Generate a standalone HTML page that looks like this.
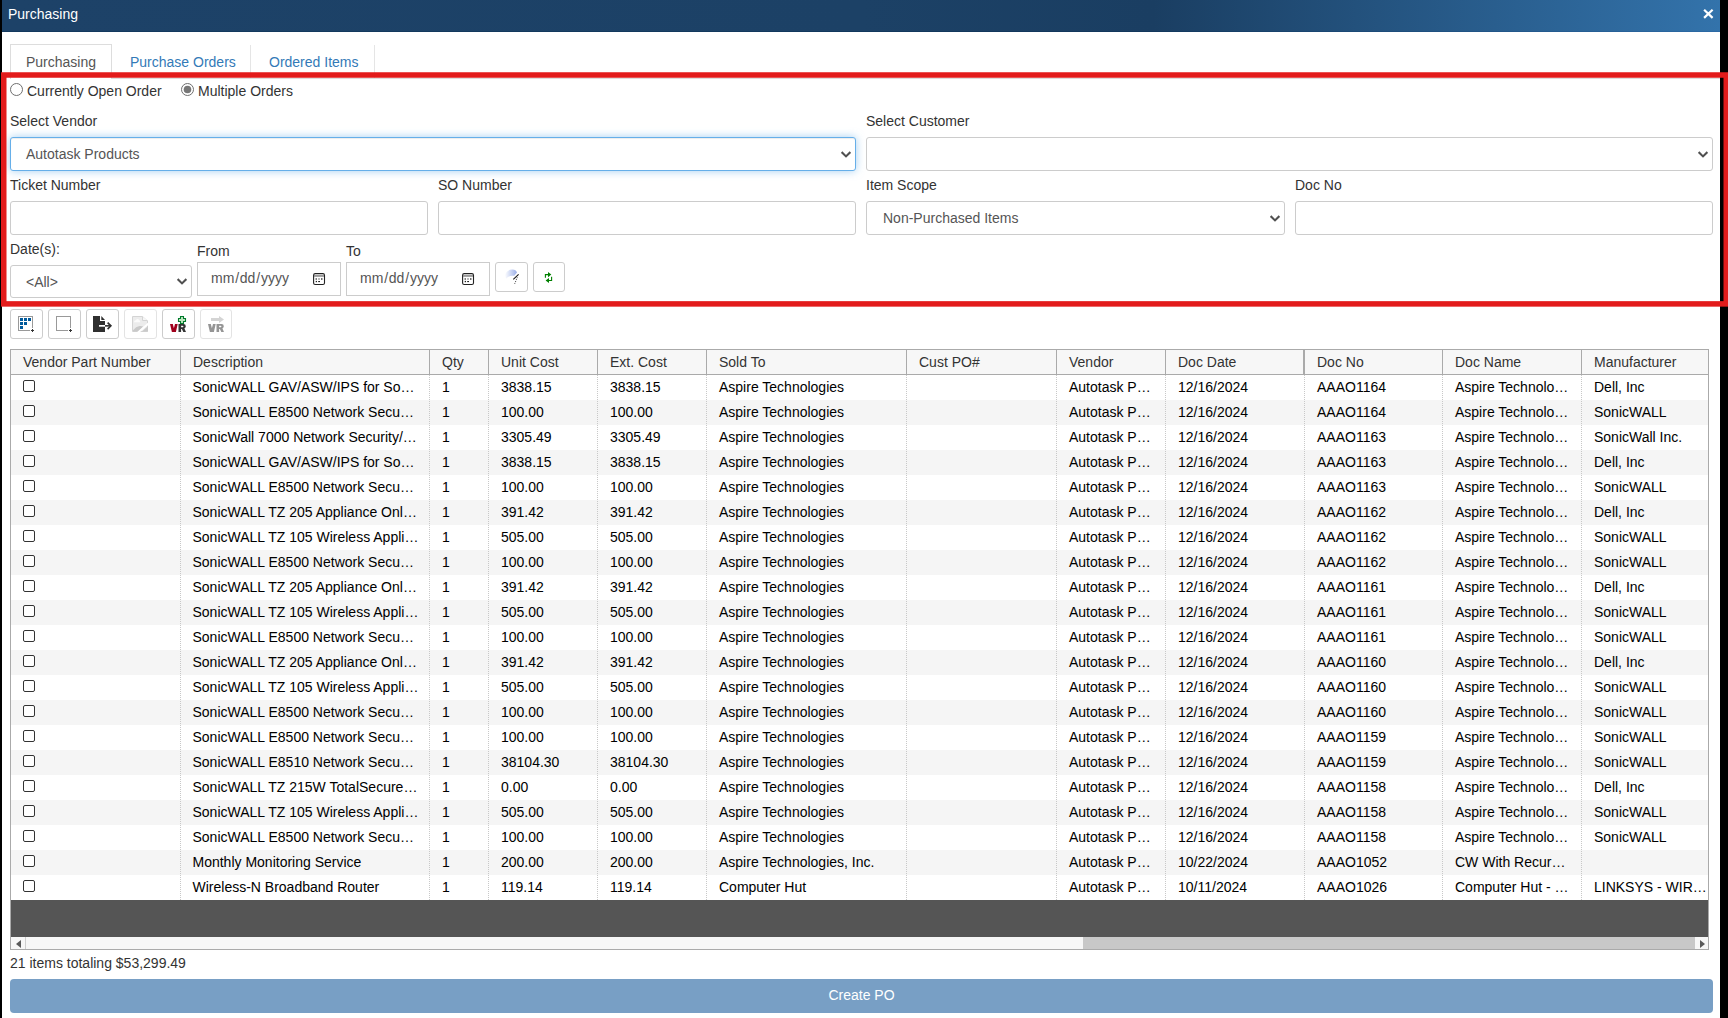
<!DOCTYPE html>
<html><head><meta charset="utf-8">
<style>
*{box-sizing:border-box;margin:0;padding:0}
html,body{width:1728px;height:1018px;overflow:hidden;background:#000;font-family:"Liberation Sans",sans-serif;font-size:14px;color:#333}
.a{position:absolute}
#dlg{position:absolute;left:2px;top:0;width:1718px;height:1018px;background:#fff;overflow:hidden}
#title{position:absolute;left:2px;top:0;width:1718px;height:32px;background:linear-gradient(to right,#1d4268 0%,#1c4166 50%,#1a3e62 67%,#3373ab 100%);}
#title .t{position:absolute;left:6px;top:6px;color:#fff;font-size:14px}
#title .x{position:absolute;right:8px;top:6px;color:#fff;font-size:16px;font-weight:bold}
.lbl{position:absolute;font-size:14px;color:#333;line-height:16px;white-space:nowrap}
.inp{position:absolute;border:1px solid #ccc;border-radius:3px;background:#fff}
.sel{position:absolute;border:1px solid #ccc;border-radius:3px;background:#fff;color:#555;line-height:16px;white-space:nowrap}
.chev{position:absolute;width:10px;height:7px}
.btn{position:absolute;border:1px solid #ccc;border-radius:3px;background:#fff}
#red{position:absolute;left:1px;top:72px;width:1727px;height:234px;border:5px solid #e31b1b}
.th{color:#333}
.td{color:#000}
.cb{position:absolute;width:12px;height:12px;border:1.2px solid #333;border-radius:2px;background:#fff}
.dsep{width:1px;background-image:linear-gradient(to bottom,#c8c8c8 50%,transparent 50%);background-size:1px 2px}
</style></head><body>
<div id="dlg"></div>
<div id="title"><span class="t">Purchasing</span></div>

<svg class="a" style="left:1700px;top:6px" width="16" height="16" viewBox="1700 6 16 16"><path d="M1704.9 10.5 L1711.8 17.1 M1711.8 10.5 L1704.9 17.1" stroke="#fff" stroke-width="2.2" stroke-linecap="square"/></svg>
<div class="a" style="left:2px;top:31px;width:1718px;height:1px;background:linear-gradient(to right,#13395e 0%,#12375c 67%,#2c6aa5 100%)"></div>
<!-- tabs -->
<div class="a" style="left:10px;top:44px;width:102px;height:35px;border:1px solid #ddd;border-bottom:none"></div>
<div class="a" style="left:250px;top:45px;width:1px;height:33px;background:#e5e5e5"></div>
<div class="a" style="left:374px;top:45px;width:1px;height:33px;background:#e5e5e5"></div>
<div class="a" style="left:111px;top:78px;width:1609px;height:1px;background:#ddd"></div>
<div class="lbl" style="left:26px;top:54px;color:#555">Purchasing</div>
<div class="lbl" style="left:130px;top:54px;color:#337ab7">Purchase Orders</div>
<div class="lbl" style="left:269px;top:54px;color:#337ab7">Ordered Items</div>

<!-- radios -->
<svg class="a" style="left:9px;top:82px" width="15" height="15"><circle cx="7.5" cy="7.5" r="6" fill="#fff" stroke="#6f6f6f" stroke-width="1"/></svg>
<div class="lbl" style="left:27px;top:83px">Currently Open Order</div>
<svg class="a" style="left:180px;top:82px" width="15" height="15"><circle cx="7.5" cy="7.5" r="6" fill="#fff" stroke="#6f6f6f" stroke-width="1"/><circle cx="7.5" cy="7.5" r="3.8" fill="#777"/></svg>
<div class="lbl" style="left:198px;top:83px">Multiple Orders</div>

<!-- row 1 -->
<div class="lbl" style="left:10px;top:113px">Select Vendor</div>
<div class="sel" style="left:10px;top:137px;width:846px;height:34px;border-color:#66afe9;box-shadow:inset 0 1px 1px rgba(0,0,0,.075),0 0 8px rgba(102,175,233,.6);color:#555;padding:8px 0 0 15px">Autotask Products</div>
<svg class="chev" style="left:841px;top:150.5px" viewBox="0 0 10 7"><path d="M0.6 1.1 L5 5.4 L9.4 1.1" fill="none" stroke="#505050" stroke-width="2.1"/></svg>
<div class="lbl" style="left:866px;top:113px">Select Customer</div>
<div class="sel" style="left:866px;top:137px;width:847px;height:34px"></div>
<svg class="chev" style="left:1698px;top:150.5px" viewBox="0 0 10 7"><path d="M0.6 1.1 L5 5.4 L9.4 1.1" fill="none" stroke="#505050" stroke-width="2.1"/></svg>

<!-- row 2 -->
<div class="lbl" style="left:10px;top:177px">Ticket Number</div>
<div class="inp" style="left:10px;top:201px;width:418px;height:34px"></div>
<div class="lbl" style="left:438px;top:177px">SO Number</div>
<div class="inp" style="left:438px;top:201px;width:418px;height:34px"></div>
<div class="lbl" style="left:866px;top:177px">Item Scope</div>
<div class="sel" style="left:866px;top:201px;width:419px;height:34px;padding:8px 0 0 16px">Non-Purchased Items</div>
<svg class="chev" style="left:1270px;top:214.5px" viewBox="0 0 10 7"><path d="M0.6 1.1 L5 5.4 L9.4 1.1" fill="none" stroke="#505050" stroke-width="2.1"/></svg>
<div class="lbl" style="left:1295px;top:177px">Doc No</div>
<div class="inp" style="left:1295px;top:201px;width:418px;height:34px"></div>

<!-- row 3 -->
<div class="lbl" style="left:10px;top:241px">Date(s):</div>
<div class="sel" style="left:10px;top:265px;width:182px;height:33px;padding:8px 0 0 15px">&lt;All&gt;</div>
<svg class="chev" style="left:177px;top:277.5px" viewBox="0 0 10 7"><path d="M0.6 1.1 L5 5.4 L9.4 1.1" fill="none" stroke="#505050" stroke-width="2.1"/></svg>
<div class="lbl" style="left:197px;top:243px">From</div>
<div class="inp" style="left:197px;top:262px;width:144px;height:34px;border-radius:0"></div>
<div class="lbl" style="left:211px;top:270px;color:#555">mm<span style="margin:0 0.8px">/</span>dd<span style="margin:0 0.8px">/</span>yyyy</div>
<div class="lbl" style="left:346px;top:243px">To</div>
<div class="inp" style="left:346px;top:262px;width:144px;height:34px;border-radius:0"></div>
<div class="lbl" style="left:360px;top:270px;color:#555">mm<span style="margin:0 0.8px">/</span>dd<span style="margin:0 0.8px">/</span>yyyy</div>
<div class="btn" style="left:495px;top:262px;width:33px;height:30px"></div>
<div class="btn" style="left:533px;top:262px;width:32px;height:30px"></div>

<svg class="a" style="left:0;top:0" width="1728" height="320" viewBox="0 0 1728 320"><rect x="3.75" y="75" width="1722.5" height="228.9" fill="none" stroke="#e31b1b" stroke-width="5.5"/></svg>

<!-- toolbar -->
<div class="btn" style="left:10px;top:309px;width:33px;height:30px"></div>
<div class="btn" style="left:48px;top:309px;width:33px;height:30px"></div>
<div class="btn" style="left:86px;top:309px;width:33px;height:30px"></div>
<div class="btn" style="left:124px;top:309px;width:33px;height:30px;border-color:#e3e3e3"></div>
<div class="btn" style="left:162px;top:309px;width:33px;height:30px"></div>
<div class="btn" style="left:200px;top:309px;width:32px;height:30px;border-color:#e3e3e3"></div>


<svg class="a" style="left:10px;top:309px" width="33" height="30" viewBox="10 309 33 30" shape-rendering="crispEdges">
<g fill="#999"><rect x="18" y="316" width="15" height="1"/><rect x="18" y="316" width="1" height="15"/><rect x="32" y="316" width="1" height="12"/><rect x="18" y="330" width="12" height="1"/></g>
<g fill="#005a9c"><rect x="20" y="318" width="3" height="3"/><rect x="24" y="318" width="3" height="3"/><rect x="28" y="318" width="3" height="3"/><rect x="20" y="322" width="3" height="3"/><rect x="24" y="322" width="3" height="3"/><rect x="20" y="326" width="3" height="3"/></g>
<g fill="#333"><rect x="31" y="330" width="3" height="1"/><rect x="32" y="329" width="1" height="3"/></g>
</svg>
<svg class="a" style="left:48px;top:309px" width="33" height="30" viewBox="48 309 33 30" shape-rendering="crispEdges">
<g fill="#999"><rect x="56" y="316" width="15" height="1"/><rect x="56" y="316" width="1" height="15"/><rect x="70" y="316" width="1" height="12"/><rect x="56" y="330" width="12" height="1"/></g>
<g fill="#333"><rect x="69" y="330" width="3" height="1"/><rect x="70" y="329" width="1" height="3"/></g>
</svg>
<svg class="a" style="left:86px;top:309px" width="33" height="30" viewBox="86 309 33 30">
<path d="M93 316 H100 V321 H105 V332 H93 Z" fill="#2f2f2f"/>
<path d="M101.3 316 L105 320 H101.3 Z" fill="#2f2f2f"/>
<rect x="99" y="325" width="6" height="1.7" fill="#fff"/>
<path d="M105 325.85 H110.5" stroke="#2f2f2f" stroke-width="1.6"/>
<path d="M107.6 322.6 L110.9 325.85 L107.6 329.1" fill="none" stroke="#2f2f2f" stroke-width="1.6"/>
</svg>
<svg class="a" style="left:124px;top:309px" width="33" height="30" viewBox="124 309 33 30">
<path d="M132.5 316.5 H142.5 L147.5 321 V331.5 H132.5 Z" fill="#ececec" stroke="#d4d4d4" stroke-width="1"/>
<path d="M142.5 316.5 V320.5 H147.5" fill="#f6f6f6" stroke="#d4d4d4" stroke-width="1"/>
<path d="M133.8 322.2 Q134.2 320.2 136 320 Q136.8 318.8 138.3 319.2 Q140 319.6 140.3 322.2 Z" fill="#fbfbfb"/>
<path d="M133 331.5 V330.2 Q136 326.6 139.5 326.1 Q141.5 325.9 143.2 326.4 L138.6 331.5 Z" fill="#c9c9c9"/>
<path d="M142 331.5 L148 326 V331.5 Z" fill="#cacaca"/>
<path d="M138 332.5 L148.5 323.5" stroke="#fff" stroke-width="2"/>
</svg>
<svg class="a" style="left:162px;top:309px" width="33" height="30" viewBox="162 309 33 30">
<path d="M178.5 318.5 H180.5 V316.5 H183.5 V318.5 H185.5 V321.5 H183.5 V323.5 H180.5 V321.5 H178.5 Z" fill="#bfe6bf" stroke="#017a2c" stroke-width="1.1"/>
<path d="M170 324 H172.8 L173.9 328.3 L175 324 H177.7 L175.9 332 H171.9 Z" fill="#a0001c"/>
<path fill-rule="evenodd" d="M178.5 324 H183.5 Q185.8 324 185.8 326.2 Q185.8 327.8 184.4 328.4 L186 332 H183.3 L181.9 328.9 H181.1 V332 H178.5 Z M181.1 325.7 V327.3 H182.7 Q183.4 327.3 183.4 326.5 Q183.4 325.7 182.7 325.7 Z" fill="#333"/>
</svg>
<svg class="a" style="left:200px;top:309px" width="33" height="30" viewBox="200 309 33 30">
<path d="M211 318 H219 V316 L224 319.5 L219 323 V321 H211 Z" fill="#d4d4d4"/>
<path d="M208 324 H210.8 L211.9 328.3 L213 324 H215.7 L213.9 332 H209.9 Z" fill="#959595"/>
<path fill-rule="evenodd" d="M216.5 324 H221.5 Q223.8 324 223.8 326.2 Q223.8 327.8 222.4 328.4 L224 332 H221.3 L219.9 328.9 H219.1 V332 H216.5 Z M219.1 325.7 V327.3 H220.7 Q221.4 327.3 221.4 326.5 Q221.4 325.7 220.7 325.7 Z" fill="#959595"/>
</svg>
<svg class="a" style="left:300px;top:262px" width="30" height="30" viewBox="300 262 30 30">
<rect x="313.6" y="273.6" width="10.9" height="10.9" rx="1.6" fill="none" stroke="#222" stroke-width="1.1"/>
<rect x="314" y="275.2" width="10" height="1.5" fill="#808080"/>
<g fill="#222"><rect x="315.6" y="278.3" width="1.2" height="1.4"/><rect x="318.3" y="278.3" width="1.4" height="1.4" fill="#777"/><rect x="321.2" y="278.2" width="1.2" height="1.6"/><rect x="315.7" y="280.9" width="1.3" height="1.3"/><rect x="318.2" y="281" width="1.8" height="1.1"/></g>
</svg>
<svg class="a" style="left:449px;top:262px" width="30" height="30" viewBox="449 262 30 30">
<rect x="462.6" y="273.6" width="10.9" height="10.9" rx="1.6" fill="none" stroke="#222" stroke-width="1.1"/>
<rect x="463" y="275.2" width="10" height="1.5" fill="#808080"/>
<g fill="#222"><rect x="464.6" y="278.3" width="1.2" height="1.4"/><rect x="467.3" y="278.3" width="1.4" height="1.4" fill="#777"/><rect x="470.2" y="278.2" width="1.2" height="1.6"/><rect x="464.7" y="280.9" width="1.3" height="1.3"/><rect x="467.2" y="281" width="1.8" height="1.1"/></g>
</svg>
<svg class="a" style="left:495px;top:262px" width="33" height="30" viewBox="495 262 33 30">
<defs><linearGradient id="sw" x1="0" x2="1" y1="0" y2="0"><stop offset="0" stop-color="#9aaee8" stop-opacity="0"/><stop offset="1" stop-color="#9aaee8"/></linearGradient></defs>
<path d="M504.8 275 Q507 269.5 512.5 269.6 Q516 269.8 517 272.5 L514.3 275.8 Q509.5 275 506 278.8 Z" fill="url(#sw)"/>
<path d="M513.3 279.3 L518.6 274.3" stroke="#111" stroke-width="1.1"/>
<path d="M517.3 277.3 L514.4 284.5" stroke="#333" stroke-width="0.9" stroke-dasharray="1 1"/>
</svg>
<svg class="a" style="left:533px;top:262px" width="32" height="30" viewBox="533 262 32 30">
<g fill="none" stroke="#008000" stroke-width="1.1"><path d="M545.4 277.8 V274.6 H549"/><path d="M551.6 276.8 V280.5 H548"/></g>
<g fill="#008000"><path d="M548 272 L551.3 274.6 L548 277.2 Z"/><path d="M549 277.9 L545.6 280.5 L549 283.1 Z"/></g>
</svg>

<!-- TABLE -->
<div id="tbl">
<div class="a" style="left:10px;top:349px;width:1699px;height:26px;background:#f7f7f7;border:1px solid #aaa;border-right-color:#aaa"></div>
<div class="a" style="left:180px;top:350px;width:1px;height:24px;background:#aaa"></div>
<div class="a" style="left:429px;top:350px;width:1px;height:24px;background:#aaa"></div>
<div class="a" style="left:488px;top:350px;width:1px;height:24px;background:#aaa"></div>
<div class="a" style="left:597px;top:350px;width:1px;height:24px;background:#aaa"></div>
<div class="a" style="left:706px;top:350px;width:1px;height:24px;background:#aaa"></div>
<div class="a" style="left:906px;top:350px;width:1px;height:24px;background:#aaa"></div>
<div class="a" style="left:1056px;top:350px;width:1px;height:24px;background:#aaa"></div>
<div class="a" style="left:1165px;top:350px;width:1px;height:24px;background:#aaa"></div>
<div class="a" style="left:1303px;top:350px;width:2px;height:24px;background:#aaa"></div>
<div class="a" style="left:1442px;top:350px;width:1px;height:24px;background:#aaa"></div>
<div class="a" style="left:1581px;top:350px;width:1px;height:24px;background:#aaa"></div>
<div class="lbl th" style="left:23px;top:354px">Vendor Part Number</div>
<div class="lbl th" style="left:193px;top:354px">Description</div>
<div class="lbl th" style="left:442px;top:354px">Qty</div>
<div class="lbl th" style="left:501px;top:354px">Unit Cost</div>
<div class="lbl th" style="left:610px;top:354px">Ext. Cost</div>
<div class="lbl th" style="left:719px;top:354px">Sold To</div>
<div class="lbl th" style="left:919px;top:354px">Cust PO#</div>
<div class="lbl th" style="left:1069px;top:354px">Vendor</div>
<div class="lbl th" style="left:1178px;top:354px">Doc Date</div>
<div class="lbl th" style="left:1317px;top:354px">Doc No</div>
<div class="lbl th" style="left:1455px;top:354px">Doc Name</div>
<div class="lbl th" style="left:1594px;top:354px">Manufacturer</div>
<div class="a" style="left:11px;top:375px;width:1697px;height:25px;background:#fff"></div>
<div class="cb" style="left:23px;top:380px"></div>
<div class="lbl td" style="left:192.5px;top:379px">SonicWALL GAV/ASW/IPS for So…</div>
<div class="lbl td" style="left:442px;top:379px">1</div>
<div class="lbl td" style="left:501px;top:379px">3838.15</div>
<div class="lbl td" style="left:610px;top:379px">3838.15</div>
<div class="lbl td" style="left:719px;top:379px">Aspire Technologies</div>
<div class="lbl td" style="left:1069px;top:379px">Autotask P…</div>
<div class="lbl td" style="left:1178px;top:379px">12/16/2024</div>
<div class="lbl td" style="left:1317px;top:379px">AAAO1164</div>
<div class="lbl td" style="left:1455px;top:379px">Aspire Technolo…</div>
<div class="lbl td" style="left:1594px;top:379px">Dell, Inc</div>
<div class="a" style="left:11px;top:400px;width:1697px;height:25px;background:#f5f5f5"></div>
<div class="cb" style="left:23px;top:405px"></div>
<div class="lbl td" style="left:192.5px;top:404px">SonicWALL E8500 Network Secu…</div>
<div class="lbl td" style="left:442px;top:404px">1</div>
<div class="lbl td" style="left:501px;top:404px">100.00</div>
<div class="lbl td" style="left:610px;top:404px">100.00</div>
<div class="lbl td" style="left:719px;top:404px">Aspire Technologies</div>
<div class="lbl td" style="left:1069px;top:404px">Autotask P…</div>
<div class="lbl td" style="left:1178px;top:404px">12/16/2024</div>
<div class="lbl td" style="left:1317px;top:404px">AAAO1164</div>
<div class="lbl td" style="left:1455px;top:404px">Aspire Technolo…</div>
<div class="lbl td" style="left:1594px;top:404px">SonicWALL</div>
<div class="a" style="left:11px;top:425px;width:1697px;height:25px;background:#fff"></div>
<div class="cb" style="left:23px;top:430px"></div>
<div class="lbl td" style="left:192.5px;top:429px">SonicWall 7000 Network Security/…</div>
<div class="lbl td" style="left:442px;top:429px">1</div>
<div class="lbl td" style="left:501px;top:429px">3305.49</div>
<div class="lbl td" style="left:610px;top:429px">3305.49</div>
<div class="lbl td" style="left:719px;top:429px">Aspire Technologies</div>
<div class="lbl td" style="left:1069px;top:429px">Autotask P…</div>
<div class="lbl td" style="left:1178px;top:429px">12/16/2024</div>
<div class="lbl td" style="left:1317px;top:429px">AAAO1163</div>
<div class="lbl td" style="left:1455px;top:429px">Aspire Technolo…</div>
<div class="lbl td" style="left:1594px;top:429px">SonicWall Inc.</div>
<div class="a" style="left:11px;top:450px;width:1697px;height:25px;background:#f5f5f5"></div>
<div class="cb" style="left:23px;top:455px"></div>
<div class="lbl td" style="left:192.5px;top:454px">SonicWALL GAV/ASW/IPS for So…</div>
<div class="lbl td" style="left:442px;top:454px">1</div>
<div class="lbl td" style="left:501px;top:454px">3838.15</div>
<div class="lbl td" style="left:610px;top:454px">3838.15</div>
<div class="lbl td" style="left:719px;top:454px">Aspire Technologies</div>
<div class="lbl td" style="left:1069px;top:454px">Autotask P…</div>
<div class="lbl td" style="left:1178px;top:454px">12/16/2024</div>
<div class="lbl td" style="left:1317px;top:454px">AAAO1163</div>
<div class="lbl td" style="left:1455px;top:454px">Aspire Technolo…</div>
<div class="lbl td" style="left:1594px;top:454px">Dell, Inc</div>
<div class="a" style="left:11px;top:475px;width:1697px;height:25px;background:#fff"></div>
<div class="cb" style="left:23px;top:480px"></div>
<div class="lbl td" style="left:192.5px;top:479px">SonicWALL E8500 Network Secu…</div>
<div class="lbl td" style="left:442px;top:479px">1</div>
<div class="lbl td" style="left:501px;top:479px">100.00</div>
<div class="lbl td" style="left:610px;top:479px">100.00</div>
<div class="lbl td" style="left:719px;top:479px">Aspire Technologies</div>
<div class="lbl td" style="left:1069px;top:479px">Autotask P…</div>
<div class="lbl td" style="left:1178px;top:479px">12/16/2024</div>
<div class="lbl td" style="left:1317px;top:479px">AAAO1163</div>
<div class="lbl td" style="left:1455px;top:479px">Aspire Technolo…</div>
<div class="lbl td" style="left:1594px;top:479px">SonicWALL</div>
<div class="a" style="left:11px;top:500px;width:1697px;height:25px;background:#f5f5f5"></div>
<div class="cb" style="left:23px;top:505px"></div>
<div class="lbl td" style="left:192.5px;top:504px">SonicWALL TZ 205 Appliance Onl…</div>
<div class="lbl td" style="left:442px;top:504px">1</div>
<div class="lbl td" style="left:501px;top:504px">391.42</div>
<div class="lbl td" style="left:610px;top:504px">391.42</div>
<div class="lbl td" style="left:719px;top:504px">Aspire Technologies</div>
<div class="lbl td" style="left:1069px;top:504px">Autotask P…</div>
<div class="lbl td" style="left:1178px;top:504px">12/16/2024</div>
<div class="lbl td" style="left:1317px;top:504px">AAAO1162</div>
<div class="lbl td" style="left:1455px;top:504px">Aspire Technolo…</div>
<div class="lbl td" style="left:1594px;top:504px">Dell, Inc</div>
<div class="a" style="left:11px;top:525px;width:1697px;height:25px;background:#fff"></div>
<div class="cb" style="left:23px;top:530px"></div>
<div class="lbl td" style="left:192.5px;top:529px">SonicWALL TZ 105 Wireless Appli…</div>
<div class="lbl td" style="left:442px;top:529px">1</div>
<div class="lbl td" style="left:501px;top:529px">505.00</div>
<div class="lbl td" style="left:610px;top:529px">505.00</div>
<div class="lbl td" style="left:719px;top:529px">Aspire Technologies</div>
<div class="lbl td" style="left:1069px;top:529px">Autotask P…</div>
<div class="lbl td" style="left:1178px;top:529px">12/16/2024</div>
<div class="lbl td" style="left:1317px;top:529px">AAAO1162</div>
<div class="lbl td" style="left:1455px;top:529px">Aspire Technolo…</div>
<div class="lbl td" style="left:1594px;top:529px">SonicWALL</div>
<div class="a" style="left:11px;top:550px;width:1697px;height:25px;background:#f5f5f5"></div>
<div class="cb" style="left:23px;top:555px"></div>
<div class="lbl td" style="left:192.5px;top:554px">SonicWALL E8500 Network Secu…</div>
<div class="lbl td" style="left:442px;top:554px">1</div>
<div class="lbl td" style="left:501px;top:554px">100.00</div>
<div class="lbl td" style="left:610px;top:554px">100.00</div>
<div class="lbl td" style="left:719px;top:554px">Aspire Technologies</div>
<div class="lbl td" style="left:1069px;top:554px">Autotask P…</div>
<div class="lbl td" style="left:1178px;top:554px">12/16/2024</div>
<div class="lbl td" style="left:1317px;top:554px">AAAO1162</div>
<div class="lbl td" style="left:1455px;top:554px">Aspire Technolo…</div>
<div class="lbl td" style="left:1594px;top:554px">SonicWALL</div>
<div class="a" style="left:11px;top:575px;width:1697px;height:25px;background:#fff"></div>
<div class="cb" style="left:23px;top:580px"></div>
<div class="lbl td" style="left:192.5px;top:579px">SonicWALL TZ 205 Appliance Onl…</div>
<div class="lbl td" style="left:442px;top:579px">1</div>
<div class="lbl td" style="left:501px;top:579px">391.42</div>
<div class="lbl td" style="left:610px;top:579px">391.42</div>
<div class="lbl td" style="left:719px;top:579px">Aspire Technologies</div>
<div class="lbl td" style="left:1069px;top:579px">Autotask P…</div>
<div class="lbl td" style="left:1178px;top:579px">12/16/2024</div>
<div class="lbl td" style="left:1317px;top:579px">AAAO1161</div>
<div class="lbl td" style="left:1455px;top:579px">Aspire Technolo…</div>
<div class="lbl td" style="left:1594px;top:579px">Dell, Inc</div>
<div class="a" style="left:11px;top:600px;width:1697px;height:25px;background:#f5f5f5"></div>
<div class="cb" style="left:23px;top:605px"></div>
<div class="lbl td" style="left:192.5px;top:604px">SonicWALL TZ 105 Wireless Appli…</div>
<div class="lbl td" style="left:442px;top:604px">1</div>
<div class="lbl td" style="left:501px;top:604px">505.00</div>
<div class="lbl td" style="left:610px;top:604px">505.00</div>
<div class="lbl td" style="left:719px;top:604px">Aspire Technologies</div>
<div class="lbl td" style="left:1069px;top:604px">Autotask P…</div>
<div class="lbl td" style="left:1178px;top:604px">12/16/2024</div>
<div class="lbl td" style="left:1317px;top:604px">AAAO1161</div>
<div class="lbl td" style="left:1455px;top:604px">Aspire Technolo…</div>
<div class="lbl td" style="left:1594px;top:604px">SonicWALL</div>
<div class="a" style="left:11px;top:625px;width:1697px;height:25px;background:#fff"></div>
<div class="cb" style="left:23px;top:630px"></div>
<div class="lbl td" style="left:192.5px;top:629px">SonicWALL E8500 Network Secu…</div>
<div class="lbl td" style="left:442px;top:629px">1</div>
<div class="lbl td" style="left:501px;top:629px">100.00</div>
<div class="lbl td" style="left:610px;top:629px">100.00</div>
<div class="lbl td" style="left:719px;top:629px">Aspire Technologies</div>
<div class="lbl td" style="left:1069px;top:629px">Autotask P…</div>
<div class="lbl td" style="left:1178px;top:629px">12/16/2024</div>
<div class="lbl td" style="left:1317px;top:629px">AAAO1161</div>
<div class="lbl td" style="left:1455px;top:629px">Aspire Technolo…</div>
<div class="lbl td" style="left:1594px;top:629px">SonicWALL</div>
<div class="a" style="left:11px;top:650px;width:1697px;height:25px;background:#f5f5f5"></div>
<div class="cb" style="left:23px;top:655px"></div>
<div class="lbl td" style="left:192.5px;top:654px">SonicWALL TZ 205 Appliance Onl…</div>
<div class="lbl td" style="left:442px;top:654px">1</div>
<div class="lbl td" style="left:501px;top:654px">391.42</div>
<div class="lbl td" style="left:610px;top:654px">391.42</div>
<div class="lbl td" style="left:719px;top:654px">Aspire Technologies</div>
<div class="lbl td" style="left:1069px;top:654px">Autotask P…</div>
<div class="lbl td" style="left:1178px;top:654px">12/16/2024</div>
<div class="lbl td" style="left:1317px;top:654px">AAAO1160</div>
<div class="lbl td" style="left:1455px;top:654px">Aspire Technolo…</div>
<div class="lbl td" style="left:1594px;top:654px">Dell, Inc</div>
<div class="a" style="left:11px;top:675px;width:1697px;height:25px;background:#fff"></div>
<div class="cb" style="left:23px;top:680px"></div>
<div class="lbl td" style="left:192.5px;top:679px">SonicWALL TZ 105 Wireless Appli…</div>
<div class="lbl td" style="left:442px;top:679px">1</div>
<div class="lbl td" style="left:501px;top:679px">505.00</div>
<div class="lbl td" style="left:610px;top:679px">505.00</div>
<div class="lbl td" style="left:719px;top:679px">Aspire Technologies</div>
<div class="lbl td" style="left:1069px;top:679px">Autotask P…</div>
<div class="lbl td" style="left:1178px;top:679px">12/16/2024</div>
<div class="lbl td" style="left:1317px;top:679px">AAAO1160</div>
<div class="lbl td" style="left:1455px;top:679px">Aspire Technolo…</div>
<div class="lbl td" style="left:1594px;top:679px">SonicWALL</div>
<div class="a" style="left:11px;top:700px;width:1697px;height:25px;background:#f5f5f5"></div>
<div class="cb" style="left:23px;top:705px"></div>
<div class="lbl td" style="left:192.5px;top:704px">SonicWALL E8500 Network Secu…</div>
<div class="lbl td" style="left:442px;top:704px">1</div>
<div class="lbl td" style="left:501px;top:704px">100.00</div>
<div class="lbl td" style="left:610px;top:704px">100.00</div>
<div class="lbl td" style="left:719px;top:704px">Aspire Technologies</div>
<div class="lbl td" style="left:1069px;top:704px">Autotask P…</div>
<div class="lbl td" style="left:1178px;top:704px">12/16/2024</div>
<div class="lbl td" style="left:1317px;top:704px">AAAO1160</div>
<div class="lbl td" style="left:1455px;top:704px">Aspire Technolo…</div>
<div class="lbl td" style="left:1594px;top:704px">SonicWALL</div>
<div class="a" style="left:11px;top:725px;width:1697px;height:25px;background:#fff"></div>
<div class="cb" style="left:23px;top:730px"></div>
<div class="lbl td" style="left:192.5px;top:729px">SonicWALL E8500 Network Secu…</div>
<div class="lbl td" style="left:442px;top:729px">1</div>
<div class="lbl td" style="left:501px;top:729px">100.00</div>
<div class="lbl td" style="left:610px;top:729px">100.00</div>
<div class="lbl td" style="left:719px;top:729px">Aspire Technologies</div>
<div class="lbl td" style="left:1069px;top:729px">Autotask P…</div>
<div class="lbl td" style="left:1178px;top:729px">12/16/2024</div>
<div class="lbl td" style="left:1317px;top:729px">AAAO1159</div>
<div class="lbl td" style="left:1455px;top:729px">Aspire Technolo…</div>
<div class="lbl td" style="left:1594px;top:729px">SonicWALL</div>
<div class="a" style="left:11px;top:750px;width:1697px;height:25px;background:#f5f5f5"></div>
<div class="cb" style="left:23px;top:755px"></div>
<div class="lbl td" style="left:192.5px;top:754px">SonicWALL E8510 Network Secu…</div>
<div class="lbl td" style="left:442px;top:754px">1</div>
<div class="lbl td" style="left:501px;top:754px">38104.30</div>
<div class="lbl td" style="left:610px;top:754px">38104.30</div>
<div class="lbl td" style="left:719px;top:754px">Aspire Technologies</div>
<div class="lbl td" style="left:1069px;top:754px">Autotask P…</div>
<div class="lbl td" style="left:1178px;top:754px">12/16/2024</div>
<div class="lbl td" style="left:1317px;top:754px">AAAO1159</div>
<div class="lbl td" style="left:1455px;top:754px">Aspire Technolo…</div>
<div class="lbl td" style="left:1594px;top:754px">SonicWALL</div>
<div class="a" style="left:11px;top:775px;width:1697px;height:25px;background:#fff"></div>
<div class="cb" style="left:23px;top:780px"></div>
<div class="lbl td" style="left:192.5px;top:779px">SonicWALL TZ 215W TotalSecure…</div>
<div class="lbl td" style="left:442px;top:779px">1</div>
<div class="lbl td" style="left:501px;top:779px">0.00</div>
<div class="lbl td" style="left:610px;top:779px">0.00</div>
<div class="lbl td" style="left:719px;top:779px">Aspire Technologies</div>
<div class="lbl td" style="left:1069px;top:779px">Autotask P…</div>
<div class="lbl td" style="left:1178px;top:779px">12/16/2024</div>
<div class="lbl td" style="left:1317px;top:779px">AAAO1158</div>
<div class="lbl td" style="left:1455px;top:779px">Aspire Technolo…</div>
<div class="lbl td" style="left:1594px;top:779px">Dell, Inc</div>
<div class="a" style="left:11px;top:800px;width:1697px;height:25px;background:#f5f5f5"></div>
<div class="cb" style="left:23px;top:805px"></div>
<div class="lbl td" style="left:192.5px;top:804px">SonicWALL TZ 105 Wireless Appli…</div>
<div class="lbl td" style="left:442px;top:804px">1</div>
<div class="lbl td" style="left:501px;top:804px">505.00</div>
<div class="lbl td" style="left:610px;top:804px">505.00</div>
<div class="lbl td" style="left:719px;top:804px">Aspire Technologies</div>
<div class="lbl td" style="left:1069px;top:804px">Autotask P…</div>
<div class="lbl td" style="left:1178px;top:804px">12/16/2024</div>
<div class="lbl td" style="left:1317px;top:804px">AAAO1158</div>
<div class="lbl td" style="left:1455px;top:804px">Aspire Technolo…</div>
<div class="lbl td" style="left:1594px;top:804px">SonicWALL</div>
<div class="a" style="left:11px;top:825px;width:1697px;height:25px;background:#fff"></div>
<div class="cb" style="left:23px;top:830px"></div>
<div class="lbl td" style="left:192.5px;top:829px">SonicWALL E8500 Network Secu…</div>
<div class="lbl td" style="left:442px;top:829px">1</div>
<div class="lbl td" style="left:501px;top:829px">100.00</div>
<div class="lbl td" style="left:610px;top:829px">100.00</div>
<div class="lbl td" style="left:719px;top:829px">Aspire Technologies</div>
<div class="lbl td" style="left:1069px;top:829px">Autotask P…</div>
<div class="lbl td" style="left:1178px;top:829px">12/16/2024</div>
<div class="lbl td" style="left:1317px;top:829px">AAAO1158</div>
<div class="lbl td" style="left:1455px;top:829px">Aspire Technolo…</div>
<div class="lbl td" style="left:1594px;top:829px">SonicWALL</div>
<div class="a" style="left:11px;top:850px;width:1697px;height:25px;background:#f5f5f5"></div>
<div class="cb" style="left:23px;top:855px"></div>
<div class="lbl td" style="left:192.5px;top:854px">Monthly Monitoring Service</div>
<div class="lbl td" style="left:442px;top:854px">1</div>
<div class="lbl td" style="left:501px;top:854px">200.00</div>
<div class="lbl td" style="left:610px;top:854px">200.00</div>
<div class="lbl td" style="left:719px;top:854px">Aspire Technologies, Inc.</div>
<div class="lbl td" style="left:1069px;top:854px">Autotask P…</div>
<div class="lbl td" style="left:1178px;top:854px">10/22/2024</div>
<div class="lbl td" style="left:1317px;top:854px">AAAO1052</div>
<div class="lbl td" style="left:1455px;top:854px">CW With Recur…</div>
<div class="a" style="left:11px;top:875px;width:1697px;height:25px;background:#fff"></div>
<div class="cb" style="left:23px;top:880px"></div>
<div class="lbl td" style="left:192.5px;top:879px">Wireless-N Broadband Router</div>
<div class="lbl td" style="left:442px;top:879px">1</div>
<div class="lbl td" style="left:501px;top:879px">119.14</div>
<div class="lbl td" style="left:610px;top:879px">119.14</div>
<div class="lbl td" style="left:719px;top:879px">Computer Hut</div>
<div class="lbl td" style="left:1069px;top:879px">Autotask P…</div>
<div class="lbl td" style="left:1178px;top:879px">10/11/2024</div>
<div class="lbl td" style="left:1317px;top:879px">AAAO1026</div>
<div class="lbl td" style="left:1455px;top:879px">Computer Hut - …</div>
<div class="lbl td" style="left:1594px;top:879px">LINKSYS - WIR…</div>
<div class="a dsep" style="left:180px;top:375px;height:525px"></div>
<div class="a dsep" style="left:429px;top:375px;height:525px"></div>
<div class="a dsep" style="left:488px;top:375px;height:525px"></div>
<div class="a dsep" style="left:597px;top:375px;height:525px"></div>
<div class="a dsep" style="left:706px;top:375px;height:525px"></div>
<div class="a dsep" style="left:906px;top:375px;height:525px"></div>
<div class="a dsep" style="left:1056px;top:375px;height:525px"></div>
<div class="a dsep" style="left:1165px;top:375px;height:525px"></div>
<div class="a dsep" style="left:1304px;top:375px;height:525px"></div>
<div class="a dsep" style="left:1442px;top:375px;height:525px"></div>
<div class="a dsep" style="left:1581px;top:375px;height:525px"></div>
<div class="a" style="left:10px;top:375px;width:1px;height:575px;background:#aaa"></div>
<div class="a" style="left:1708px;top:375px;width:1px;height:575px;background:#aaa"></div>
<div class="a" style="left:11px;top:900px;width:1697px;height:37px;background:#555"></div>
<div class="a" style="left:10px;top:937px;width:1699px;height:13px;background:#f7f7f7;border:1px solid #aaa;border-top:none"></div>
<div class="a" style="left:25px;top:937px;width:1px;height:12px;background:#cfcfcf"></div>
<div class="a" style="left:1083px;top:937px;width:612px;height:12px;background:#c8c8c8"></div>
<svg class="a" style="left:15px;top:940px" width="7" height="8"><path d="M6 0 L6 8 L1 4 Z" fill="#5a5a5a"/></svg>
<svg class="a" style="left:1699px;top:940px" width="7" height="8"><path d="M1 0 L1 8 L6 4 Z" fill="#5a5a5a"/></svg>
</div>
<!-- /tbl -->

<!-- footer -->
<div class="lbl" style="left:10px;top:955px">21 items totaling $53,299.49</div>
<div class="a" style="left:10px;top:979px;width:1703px;height:34px;background:#789fc5;border-radius:4px;color:#fff;text-align:center;line-height:32px">Create PO</div>
</body></html>
